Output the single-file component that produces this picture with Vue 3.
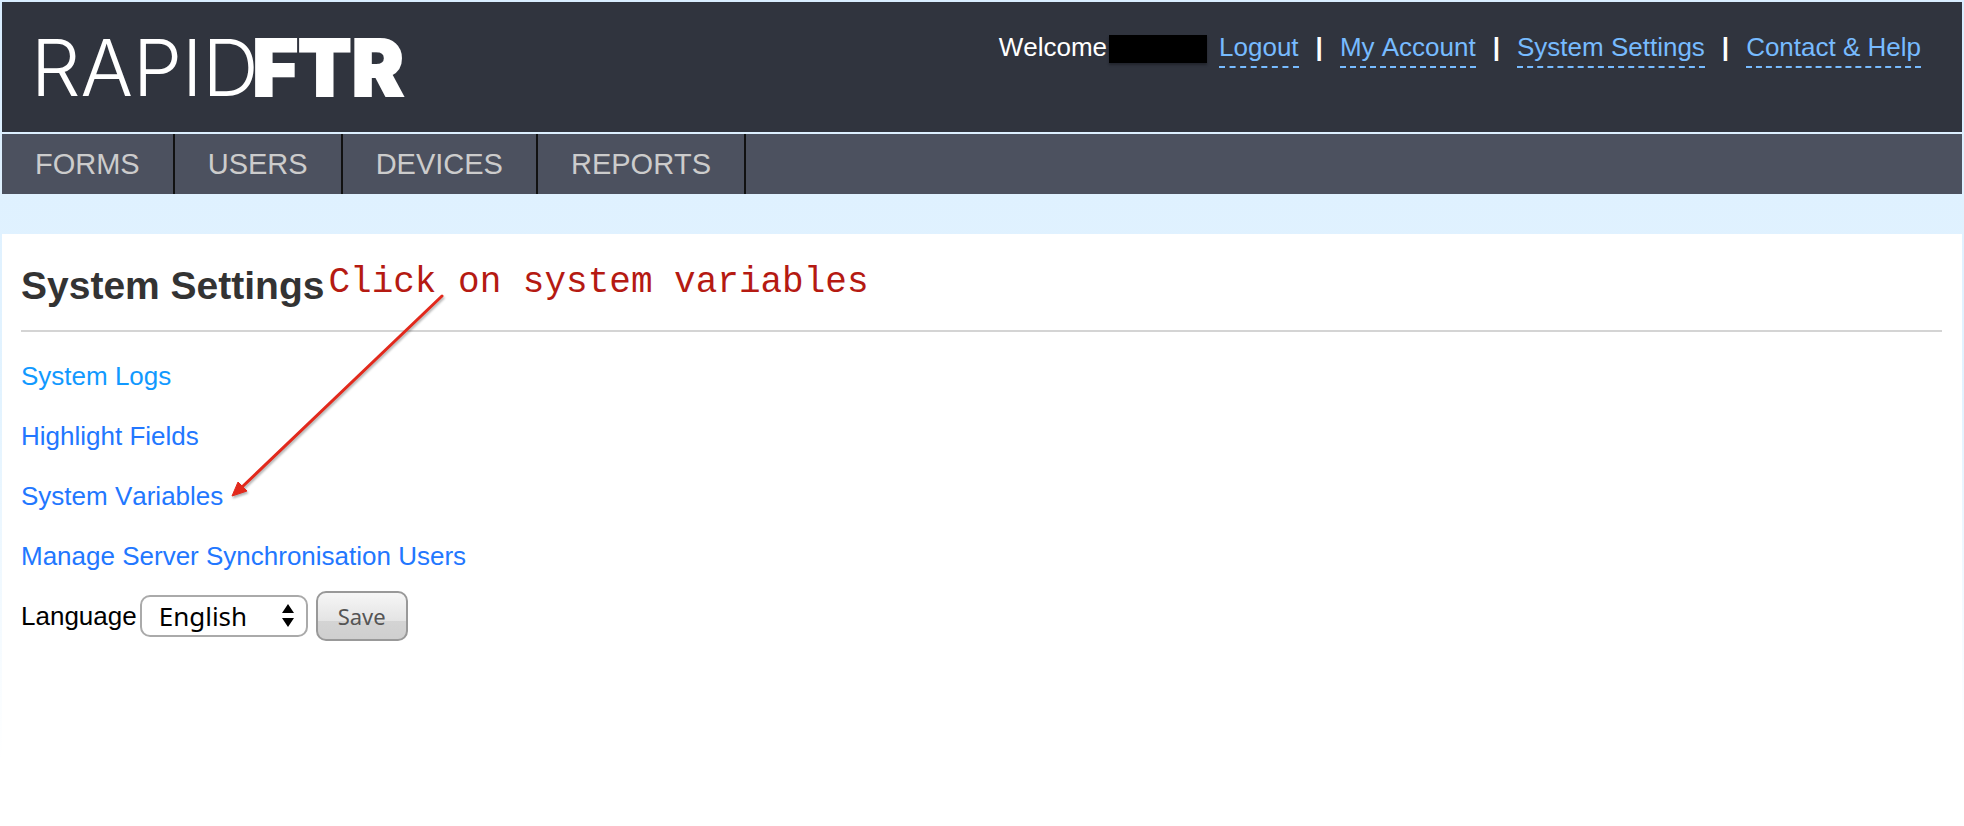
<script setup>
import { ref } from 'vue'

const accountLinks = ['Logout', 'My Account', 'System Settings', 'Contact & Help']
const sections = ['Forms', 'Users', 'Devices', 'Reports']
const settings = [
  { label: 'System Logs', active: true },
  { label: 'Highlight Fields' },
  { label: 'System Variables', marked: true },
  { label: 'Manage Server Synchronisation Users' }
]
const languages = ['English', 'Français', 'Español']
const language = ref('English')
</script>

<template>
  <div class="page">
    <header class="top">
      <a class="logo" href="#" aria-label="RapidFTR"><span class="thin">RAPID</span><span class="heavy">FTR</span></a>
      <div class="account">
        <span class="welcome">Welcome</span>
        <span class="user"></span>
        <template v-for="(link, i) in accountLinks" :key="link">
          <span v-if="i" class="pipe">|</span>
          <a href="#">{{ link }}</a>
        </template>
      </div>
    </header>

    <nav class="sections">
      <a v-for="s in sections" :key="s" href="#">{{ s }}</a>
    </nav>

    <main class="content">
      <div class="title">
        <h1>System Settings</h1>
        <span class="callout">Click on system variables</span>
      </div>

      <ul class="settings">
        <li v-for="item in settings" :key="item.label">
          <a href="#" :class="{ active: item.active }">{{ item.label }}</a>
          <svg v-if="item.marked" class="arrow" width="226" height="216" viewBox="0 0 226 216" aria-hidden="true">
            <path d="M217 8 L16 200" stroke="#e2291c" stroke-width="3" fill="none" stroke-linecap="round" />
            <path d="M7 208 L13 194 L22 203 Z" fill="#e2291c" stroke="#e2291c" />
          </svg>
        </li>
      </ul>

      <form class="language" @submit.prevent>
        <label for="language">Language</label>
        <span class="picker">
          <select id="language" v-model="language">
            <option v-for="l in languages" :key="l">{{ l }}</option>
          </select>
          <svg width="12" height="24" viewBox="0 0 12 24" aria-hidden="true">
            <path d="M6 0 L12 9 H0 Z M0 14 H12 L6 23 Z" fill="#000" />
          </svg>
        </span>
        <button type="submit">Save</button>
      </form>
    </main>
  </div>
</template>

<style>
body {
  margin: 0;
  background: #fff;
}
</style>

<style scoped>
.page {
  box-sizing: border-box;
  min-height: 100vh;
  padding: 2px 2px 0;
  display: flex;
  flex-direction: column;
  background: linear-gradient(#d8edff 0, #dff1ff 190px, #e2f3ff 400px, #fff 760px);
  font-family: "Liberation Sans", Arial, sans-serif;
  font-size: 26px;
  font-kerning: none;
  line-height: 30px;
  color: #000;
}

a {
  text-decoration: none;
}

.top {
  display: flex;
  justify-content: space-between;
  align-items: flex-start;
  height: 130px;
  margin-bottom: 2px;
  padding: 0 41px 0 29px;
  box-sizing: border-box;
  background: #30343e;
}

.logo {
  display: flex;
  padding-top: 26px;
  color: #fff;
  font-family: Inter, sans-serif;
  font-size: 78px;
  line-height: 80px;
}

.thin {
  font-weight: 300;
}

.heavy {
  margin-left: -6px;
  font-weight: 900;
  -webkit-text-stroke: 2px #fff;
}

.account {
  display: flex;
  padding-top: 30px;
  color: #fff;
}

.account a {
  padding-bottom: 4px;
  border-bottom: 2px dashed #77bbff;
  color: #77bbff;
}

.user {
  width: 98px;
  height: 28px;
  margin: 3px 12px 0 2px;
  background: #000;
  box-shadow: 0 2px 2px #22252d;
}

.pipe {
  margin: 0 17px;
  font-weight: bold;
}

.sections {
  display: flex;
  margin-bottom: 40px;
  background: #4c515f;
}

.sections a {
  padding: 0 33px;
  border-right: 2px solid #111;
  color: #ccc;
  font-size: 29px;
  line-height: 60px;
  text-transform: uppercase;
}

.content {
  flex: 1;
  padding: 0 20px 0 19px;
  background: #fff;
}

.title {
  display: flex;
  align-items: flex-start;
  padding: 30px 0 22px;
  border-bottom: 2px solid #d4d4d4;
}

h1 {
  margin: 0;
  color: #333;
  font-size: 39px;
  line-height: 44px;
}

.callout {
  margin-left: 4px;
  color: #b51a12;
  font-family: "Courier New", "Liberation Mono", monospace;
  font-size: 36px;
  line-height: 38px;
}

.settings {
  margin: 0;
  padding: 14px 0 0;
  list-style: none;
}

.settings li {
  position: relative;
  line-height: 60px;
}

.settings a {
  color: #2277ff;
}

.settings a.active {
  color: #1199ff;
}

.arrow {
  position: absolute;
  left: 204px;
  bottom: 22px;
  filter: drop-shadow(1px 2px 1px rgba(0, 0, 0, 0.3));
}

.language {
  display: flex;
  align-items: center;
  height: 60px;
}

.picker {
  position: relative;
  display: flex;
  margin: 0 8px 0 3px;
}

.picker svg {
  position: absolute;
  right: 14px;
  top: 9px;
  pointer-events: none;
}

select {
  appearance: none;
  box-sizing: border-box;
  width: 168px;
  height: 42px;
  padding: 0 17px;
  border: 2px solid #aaa;
  border-radius: 10px;
  background: #fff;
  color: #000;
  font-family: "Noto Sans", sans-serif;
  font-size: 26px;
}

button {
  box-sizing: border-box;
  height: 50px;
  padding: 0 20px;
  border: 2px solid #999;
  border-radius: 10px;
  background: linear-gradient(#f6f6f6, #e4e4e4 60%, #d4d4d4 60%, #cfcfcf);
  color: #555;
  font-family: "Noto Sans", sans-serif;
  font-size: 22px;
}
</style>
